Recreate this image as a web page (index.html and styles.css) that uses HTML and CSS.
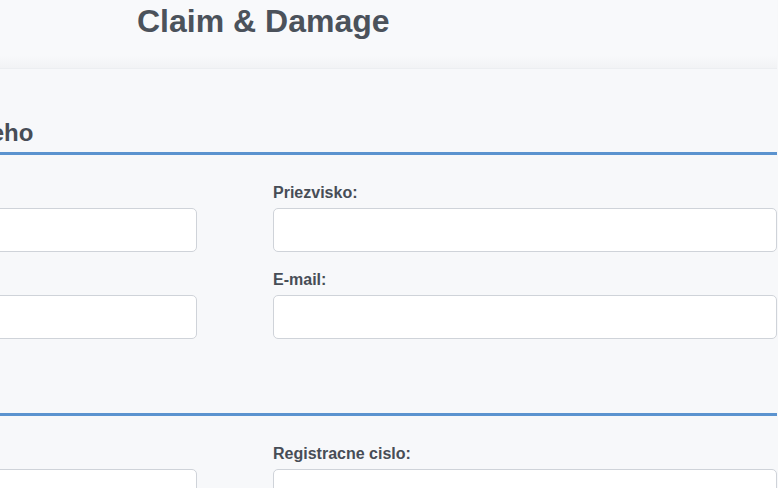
FILE: index.html
```html
<!DOCTYPE html>
<html lang="sk">
<head>
<meta charset="utf-8">
<title>Claim &amp; Damage</title>
<link rel="stylesheet" href="styles.css">
</head>
<body>
<div class="page">
  <header class="topbar">
    <h1 class="title">Claim &amp; Damage</h1>
  </header>
  <main class="content">
    <section class="section">
      <h2 class="section-title">Kontaktne udaje poisteneho</h2>
      <div class="grid">
        <div class="field">
          <label class="label">Meno:</label>
          <input class="input" type="text">
        </div>
        <div class="field">
          <label class="label">Priezvisko:</label>
          <input class="input" type="text">
        </div>
        <div class="field">
          <label class="label">Telefon:</label>
          <input class="input" type="text">
        </div>
        <div class="field">
          <label class="label">E-mail:</label>
          <input class="input" type="text">
        </div>
      </div>
    </section>
    <section class="section">
      <h2 class="section-title short">Vozidlo</h2>
      <div class="grid">
        <div class="field">
          <label class="label">Znacka:</label>
          <input class="input" type="text">
        </div>
        <div class="field">
          <label class="label">Registracne cislo:</label>
          <input class="input" type="text">
        </div>
      </div>
    </section>
  </main>
</div>
</body>
</html>
```

FILE: styles.css
```css
* { box-sizing: border-box; }
html, body {
  margin: 0;
  padding: 0;
  background: #f7f8fa;
  overflow: hidden;
}
body {
  font-family: "Liberation Sans", Arial, sans-serif;
  color: #474d56;
}
.page {
  width: 1085px;
  margin-left: -308px;
}
.topbar {
  height: 69px;
  background: linear-gradient(#f8f9fb 0%, #f8f9fb 82%, #f2f3f5 100%);
  border-bottom: 1px solid #eceef1;
  padding-left: 445px;
}
.title {
  margin: 0;
  padding-top: 3px;
  font-size: 32px;
  line-height: 37px;
  font-weight: bold;
  color: #4b525b;
}
.content {
  padding-top: 49px;
}
.section {
  margin-bottom: 40px;
}
.section-title {
  margin: 0;
  padding-left: 20px;
  font-size: 24px;
  line-height: 29px;
  font-weight: bold;
  color: #474d56;
  border-bottom: 3px solid #5b93cf;
  padding-bottom: 5px;
}
.grid {
  display: grid;
  grid-template-columns: 505px 504px;
  column-gap: 76px;
  row-gap: 18px;
  padding-top: 28px;
}
.field {
  display: flex;
  flex-direction: column;
  gap: 6px;
}
.label {
  font-size: 16px;
  line-height: 19px;
  font-weight: bold;
  color: #474d56;
}
.input {
  height: 44px;
  border: 1px solid #cfd3d9;
  border-radius: 5px;
  background: #ffffff;
  font: inherit;
  padding: 0 12px;
}
```
